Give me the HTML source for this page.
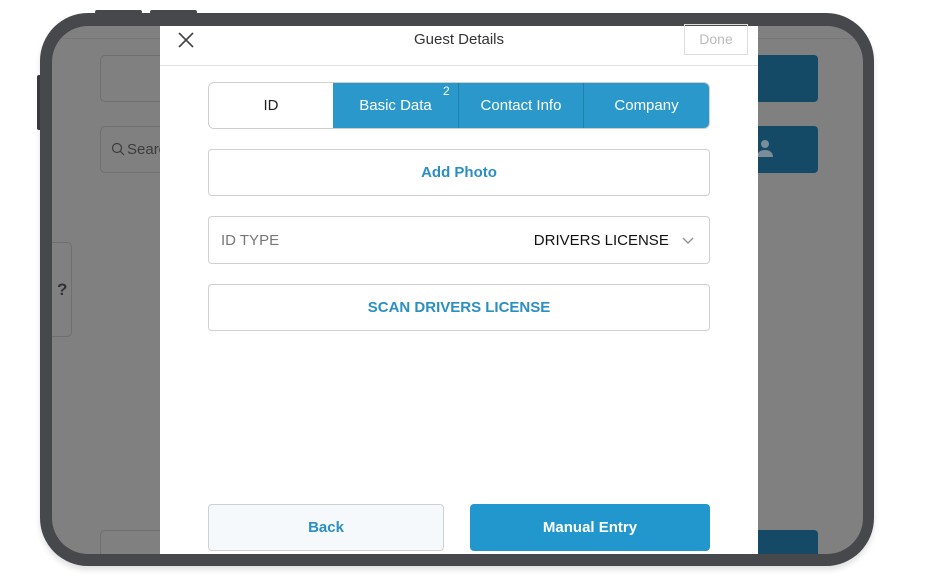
<!DOCTYPE html>
<html><head><style>
*{margin:0;padding:0;box-sizing:border-box}
body{width:926px;height:580px;background:#fff;position:relative;overflow:hidden;font-family:"Liberation Sans",sans-serif}
.abs{position:absolute}
.frame{left:40px;top:13px;width:834px;height:553px;background:#47484c;border-radius:48px;box-shadow:0 4px 6px rgba(0,0,0,.12)}
.screen{left:52px;top:26px;width:811px;height:528px;background:#808080;border-radius:36px;overflow:hidden}
.gbox{position:absolute;border:1px solid #6f6f6f;border-radius:5px}
.dbox{position:absolute;background:#154a66;border-radius:4px}
.modal{left:160px;top:26px;width:598px;height:528px;background:#fff}
.btn{position:absolute;border:1px solid #d0d0d0;border-radius:4px;display:flex;align-items:center;justify-content:center;font-size:15px}
</style></head><body>
<div class="abs" style="left:95px;top:10px;width:47px;height:4px;background:#47484c;border-radius:2px"></div>
<div class="abs" style="left:150px;top:10px;width:47px;height:4px;background:#47484c;border-radius:2px"></div>
<div class="abs" style="left:37px;top:75px;width:5px;height:55px;background:#3a3b3e;border-radius:2px"></div>
<div class="abs frame"></div>
<div class="abs screen">
  <div class="abs" style="left:0;top:12px;width:811px;height:1px;background:#777"></div>
  <div class="gbox" style="left:48px;top:29px;width:80px;height:47px"></div>
  <div class="gbox" style="left:48px;top:100px;width:80px;height:47px;color:#3c3c3c;font-size:15px;padding:14px 0 0 10px">
    <svg width="14" height="14" viewBox="0 0 14 14" style="vertical-align:-2px;margin-right:2px"><circle cx="6" cy="6" r="4.5" fill="none" stroke="#3c3c3c" stroke-width="1.2"/><path d="M9.3 9.3L13 13" stroke="#3c3c3c" stroke-width="1.2"/></svg>Search</div>
  <div class="dbox" style="left:700px;top:29px;width:66px;height:47px"></div>
  <div class="dbox" style="left:700px;top:100px;width:66px;height:47px">
    <svg class="abs" style="left:4px;top:12px" width="18" height="22" viewBox="0 0 18 22"><circle cx="9" cy="6" r="4" fill="#7a8d99"/><path d="M1 19c0-5 4-7 8-7s8 2 8 7z" fill="#7a8d99"/></svg>
  </div>
  <div class="gbox" style="left:-5px;top:216px;width:25px;height:95px;color:#333;font-size:17px;font-weight:bold;padding:37px 0 0 9px">?</div>
  <div class="gbox" style="left:48px;top:504px;width:80px;height:40px"></div>
  <div class="dbox" style="left:700px;top:504px;width:66px;height:40px"></div>
</div>
<div class="abs modal">
  <svg class="abs" style="left:18px;top:6px" width="16" height="16" viewBox="0 0 16 16"><path d="M1 1L15 15M15 1L1 15" stroke="#444" stroke-width="1.6"/></svg>
  <div class="abs" style="left:0;top:5px;width:598px;text-align:center;font-size:15px;color:#333">Guest Details</div>
  <div class="abs" style="left:524px;top:-2px;width:64px;height:31px;border:1px solid #ddd;color:#bbb;font-size:14px;text-align:center;line-height:28px">Done</div>
  <div class="abs" style="left:0;top:39px;width:598px;height:1px;background:#e2e2e2"></div>
  <div class="abs" style="left:48px;top:56px;width:502px;height:47px;border:1px solid #cfcfcf;border-radius:6px;overflow:hidden;display:flex;font-size:15px">
    <div style="width:124px;background:#fff;color:#222;display:flex;align-items:center;justify-content:center">ID</div>
    <div style="width:126px;background:#2b98cc;color:#fff;display:flex;align-items:center;justify-content:center;position:relative;border-right:1px solid #1f7fad">Basic Data<span style="position:absolute;left:110px;top:1px;font-size:12px">2</span></div>
    <div style="width:125px;background:#2b98cc;color:#fff;display:flex;align-items:center;justify-content:center;border-right:1px solid #1f7fad">Contact Info</div>
    <div style="flex:1;background:#2b98cc;color:#fff;display:flex;align-items:center;justify-content:center">Company</div>
  </div>
  <div class="btn" style="left:48px;top:123px;width:502px;height:47px;color:#2b8fc2;font-weight:bold">Add Photo</div>
  <div class="btn" style="left:48px;top:190px;width:502px;height:48px;justify-content:space-between;padding:0 14px 0 12px">
    <span style="color:#777">ID TYPE</span>
    <span style="color:#111">DRIVERS LICENSE <svg width="14" height="10" viewBox="0 0 14 10" style="margin-left:8px"><path d="M2 3l5 5 5-5" fill="none" stroke="#999" stroke-width="1.5"/></svg></span>
  </div>
  <div class="btn" style="left:48px;top:258px;width:502px;height:47px;color:#2b8fc2;font-weight:bold">SCAN DRIVERS LICENSE</div>
  <div class="btn" style="left:48px;top:478px;width:236px;height:47px;background:#f6f9fb;color:#2b8fc2;font-weight:bold">Back</div>
  <div class="btn" style="left:310px;top:478px;width:240px;height:47px;background:#2197cd;border-color:#2197cd;color:#fff;font-weight:bold">Manual Entry</div>
</div>
</body></html>
